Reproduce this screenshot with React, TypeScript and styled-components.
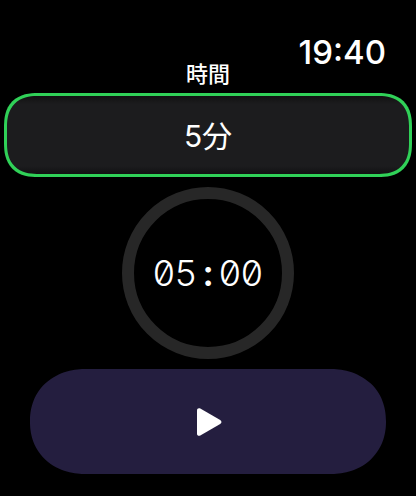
import React, { useState } from "react";
import styled, { createGlobalStyle } from "styled-components";

const GlobalStyle = createGlobalStyle`
  *, *::before, *::after {
    box-sizing: border-box;
  }
  body {
    margin: 0;
    background: #000;
    color: #fff;
    font-family: Inter, "Noto Sans CJK JP", sans-serif;
  }
`;

const Screen = styled.main`
  display: flex;
  flex-direction: column;
  min-height: 100vh;
  padding: 32px 4px 22px;
`;

const StatusBar = styled.header`
  display: flex;
  justify-content: flex-end;
  height: 28px;
  padding-right: 26px;
`;

const Clock = styled.time`
  font-size: 33px;
  font-weight: 500;
  line-height: 40px;
`;

const DurationField = styled.div`
  display: flex;
  flex-direction: column;
`;

const FieldLabel = styled.label`
  align-self: center;
  margin-bottom: 5px;
  font-size: 22px;
  font-weight: 500;
  line-height: 28px;
`;

const DurationSelect = styled.select`
  appearance: none;
  width: 100%;
  height: 84px;
  padding: 2px 0 0;
  border: 3px solid #30d158;
  border-radius: 34px;
  corner-shape: superellipse(1.3);
  outline: none;
  background: linear-gradient(
    #111112,
    #1c1c1e 8px,
    #1c1c1e calc(100% - 8px),
    #111112
  );
  color: #fff;
  font-family: inherit;
  font-size: 30px;
  font-weight: 400;
  text-align: center;
  text-align-last: center;
`;

const Dial = styled.section`
  display: flex;
  align-items: center;
  justify-content: center;
  align-self: center;
  width: 172px;
  height: 172px;
  margin: 10px 0;
  border: 12px solid #272727;
  border-radius: 50%;
`;

const Remaining = styled.time`
  display: grid;
  grid-template-columns: repeat(5, 22px);
  justify-items: center;
  font-size: 36px;
  line-height: 44px;
  font-feature-settings: "tnum", "zero";
`;

const Character = styled.span<{ $heavy: boolean }>`
  font-weight: ${({ $heavy }) => ($heavy ? 600 : 300)};
`;

const StartButton = styled.button`
  display: flex;
  align-items: center;
  justify-content: center;
  height: 105px;
  margin: 0 26px;
  padding: 0;
  border: 0;
  border-radius: 56px / 52px;
  corner-shape: superellipse(1.1);
  background: #241e3f;
  color: #fff;
`;

const PlayIcon = () => (
  <svg width="28" height="30" viewBox="0 0 28 30" aria-hidden="true">
    <path
      d="M3 3.4C3 1.5 4.7.7 6.3 1.6L26.2 13.1C27.9 14.1 27.9 16 26.2 17L6.3 28.5C4.7 29.4 3 28.6 3 26.7Z"
      fill="currentColor"
    />
  </svg>
);

const durations = [1, 3, 5, 10, 15];

export default function App() {
  const [minutes, setMinutes] = useState(5);
  const remaining = `${String(minutes).padStart(2, "0")}:00`;

  return (
    <>
      <GlobalStyle />
      <Screen>
        <StatusBar>
          <Clock>19:40</Clock>
        </StatusBar>
        <DurationField>
          <FieldLabel htmlFor="duration">時間</FieldLabel>
          <DurationSelect
            id="duration"
            value={minutes}
            onChange={(event) => setMinutes(Number(event.target.value))}
          >
            {durations.map((value) => (
              <option key={value} value={value}>
                {value}分
              </option>
            ))}
          </DurationSelect>
        </DurationField>
        <Dial>
          <Remaining>
            {remaining.split("").map((character, index) => (
              <Character key={index} $heavy={character === ":"}>
                {character}
              </Character>
            ))}
          </Remaining>
        </Dial>
        <StartButton type="button" aria-label="開始">
          <PlayIcon />
        </StartButton>
      </Screen>
    </>
  );
}
